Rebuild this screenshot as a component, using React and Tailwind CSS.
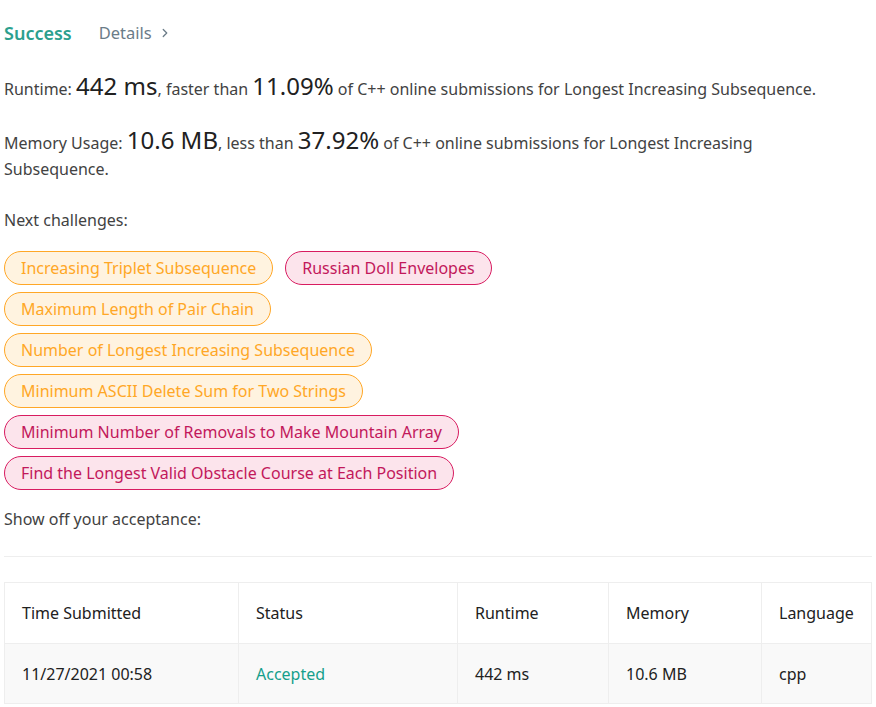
import React from "react";
import { ChevronRight } from "lucide-react";

const challenges = [
    { name: "Increasing Triplet Subsequence", level: "medium" },
    { name: "Russian Doll Envelopes", level: "hard" },
    { name: "Maximum Length of Pair Chain", level: "medium" },
    { name: "Number of Longest Increasing Subsequence", level: "medium" },
    { name: "Minimum ASCII Delete Sum for Two Strings", level: "medium" },
    { name: "Minimum Number of Removals to Make Mountain Array", level: "hard" },
    { name: "Find the Longest Valid Obstacle Course at Each Position", level: "hard" },
];

const columns = [
    { title: "Time Submitted", value: "11/27/2021 00:58", w: "w-[233px]" },
    { title: "Status", value: "Accepted", w: "w-[219px]", accent: true },
    { title: "Runtime", value: "442 ms", w: "w-[151px]" },
    { title: "Memory", value: "10.6 MB", w: "w-[153px]" },
    { title: "Language", value: "cpp", w: "flex-1" },
];

export default function App() {
    return (
        <div
            className="min-h-screen bg-white px-1 pt-[20px] text-[16px] text-[#424242]"
            style={{ fontFamily: "'Noto Sans', 'Open Sans', sans-serif" }}
        >
            {/* Header */}
            <div className="flex items-center h-[26px]">
                <span className="font-semibold text-[18px] text-[#2c9f8e]">Success</span>
                <span className="ml-[27px] text-[#6b7c88] text-[16.5px]">Details</span>
                <ChevronRight className="ml-[6px] w-[14px] h-[14px] text-[#6b7c88]" strokeWidth={2.2} />
            </div>

            {/* Stats */}
            <p className="mt-[28px] leading-[26px]">
                Runtime: <span className="text-[24px] leading-none text-[#212121]">442 ms</span>, faster than{" "}
                <span className="text-[24px] leading-none text-[#212121]">11.09%</span> of C++ online submissions for
                Longest Increasing Subsequence.
            </p>
            <p className="mt-[26px] leading-[26px] max-w-[775px]">
                Memory Usage: <span className="text-[24px] leading-none text-[#212121]">10.6 MB</span>, less than{" "}
                <span className="text-[24px] leading-none text-[#212121]">37.92%</span> of C++ online submissions for
                Longest Increasing Subsequence.
            </p>

            <p className="mt-[25px] leading-[26px]">Next challenges:</p>

            {/* Challenges */}
            <div className="mt-[18px] flex flex-wrap gap-x-[12px] gap-y-[7px] pr-[360px]">
                {challenges.map((c) => (
                    <span
                        key={c.name}
                        className={`h-[34px] flex items-center px-[16px] rounded-full border whitespace-nowrap ${
                            c.level === "hard"
                                ? "bg-[#fce4ec] border-[#d81b60] text-[#c2185b]"
                                : "bg-[#fff3e0] border-[#ffa726] text-[#ffa726]"
                        }`}
                    >
                        {c.name}
                    </span>
                ))}
            </div>

            <p className="mt-[16px] leading-[26px]">Show off your acceptance:</p>
            <hr className="mt-[24px] border-t border-[#eeeeee]" />

            {/* Table */}
            <div className="mt-[25px] border border-[#eeeeee] text-[#212121]">
                <div className="flex h-[60px]">
                    {columns.map((col, i) => (
                        <div
                            key={col.title}
                            className={`${col.w} flex items-center px-[17px] ${i > 0 ? "border-l border-[#eeeeee]" : ""}`}
                        >
                            {col.title}
                        </div>
                    ))}
                </div>
                <div className="flex h-[60px] bg-[#f9f9f9] border-t border-[#eeeeee]">
                    {columns.map((col, i) => (
                        <div
                            key={col.title}
                            className={`${col.w} flex items-center px-[17px] ${i > 0 ? "border-l border-[#eeeeee]" : ""} ${
                                col.accent ? "text-[#159f8b]" : ""
                            }`}
                        >
                            {col.value}
                        </div>
                    ))}
                </div>
            </div>
        </div>
    );
}
